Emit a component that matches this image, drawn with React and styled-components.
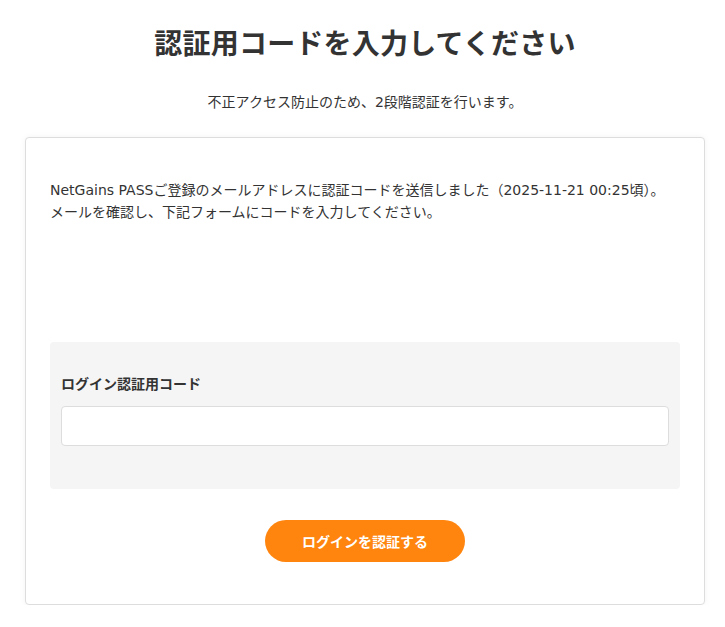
import React, { useState } from "react";
import styled, { createGlobalStyle } from "styled-components";

const GlobalStyle = createGlobalStyle`
  body {
    margin: 0;
    background: #fff;
    color: #333;
    font-family: "DejaVu Sans", "Noto Sans CJK JP", sans-serif;
  }
`;

const Page = styled.div`
  padding: 0 20px 0 25px;
`;

const Title = styled.h1`
  margin: 0;
  padding-top: 26px;
  font-size: 28px;
  line-height: 38px;
  font-weight: 700;
  letter-spacing: 0.2px;
  text-align: center;
  color: #333;
`;

const Lead = styled.p`
  margin: 28px 0 0;
  font-size: 14px;
  line-height: 20px;
  text-align: center;
`;

const Card = styled.div`
  margin-top: 25px;
  border: 1px solid #ddd;
  border-radius: 4px;
  background: #fff;
  box-shadow: 0 0 6px rgba(0, 0, 0, 0.05);
  padding: 41px 24px 42px;
`;

const Message = styled.p`
  margin: 0;
  font-size: 14px;
  line-height: 22px;
`;

const FormBox = styled.div`
  margin-top: 119px;
  background: #f5f5f5;
  border-radius: 4px;
  padding: 32px 11px 43px;
`;

const Label = styled.label`
  display: block;
  font-size: 14px;
  font-weight: 700;
  line-height: 20px;
`;

const Input = styled.input`
  display: block;
  box-sizing: border-box;
  width: 100%;
  height: 40px;
  margin-top: 12px;
  border: 1px solid #ddd;
  border-radius: 4px;
  background: #fff;
  font: inherit;
  padding: 0 10px;
  outline: none;
`;

const Actions = styled.div`
  display: flex;
  justify-content: center;
  margin-top: 31px;
`;

const SubmitButton = styled.button`
  width: 200px;
  height: 42px;
  border: none;
  border-radius: 21px;
  background: #ff850f;
  color: #fff;
  font-family: inherit;
  font-size: 14px;
  font-weight: 700;
  cursor: pointer;
`;

const App = () => {
  const [code, setCode] = useState("");

  return (
    <Page>
      <GlobalStyle />
      <Title>認証用コードを入力してください</Title>
      <Lead>不正アクセス防止のため、2段階認証を行います。</Lead>
      <Card>
        <Message>
          NetGains PASSご登録のメールアドレスに認証コードを送信しました（2025-11-21 00:25頃）。
          <br />
          メールを確認し、下記フォームにコードを入力してください。
        </Message>
        <FormBox>
          <Label htmlFor="code">ログイン認証用コード</Label>
          <Input id="code" value={code} onChange={(e) => setCode(e.target.value)} />
        </FormBox>
        <Actions>
          <SubmitButton type="button">ログインを認証する</SubmitButton>
        </Actions>
      </Card>
    </Page>
  );
};

export default App;
